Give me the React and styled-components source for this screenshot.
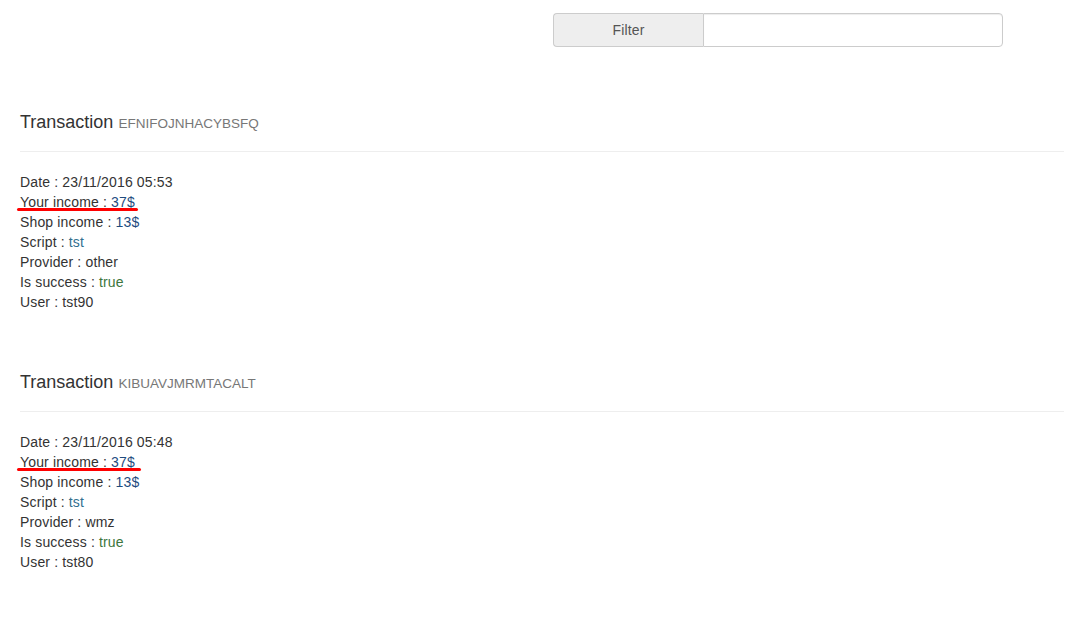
import React from 'react';
import styled, { createGlobalStyle } from "styled-components";

const GlobalStyle = createGlobalStyle`
  body {
    margin: 0;
    background: #fff;
    font-family: "Liberation Sans", Arial, sans-serif;
    font-size: 14px;
    line-height: 20px;
    color: #333;
  }
`;

const Page = styled.div`
  padding: 13px 1px 40px 20px;
`;

const FilterGroup = styled.div`
  display: flex;
  width: 450px;
  height: 34px;
  margin-left: 533px;
  box-sizing: border-box;
`;

const FilterAddon = styled.span`
  display: flex;
  align-items: center;
  justify-content: center;
  width: 150px;
  box-sizing: border-box;
  background: #eee;
  border: 1px solid #ccc;
  border-right: 0;
  border-radius: 4px 0 0 4px;
  color: #555;
  font-size: 14px;
  letter-spacing: 0.15px;
`;

const FilterInput = styled.input`
  flex: 1;
  min-width: 0;
  box-sizing: border-box;
  border: 1px solid #ccc;
  border-radius: 0 4px 4px 0;
  padding: 6px 12px;
  font: inherit;
  box-shadow: inset 0 1px 1px rgba(0, 0, 0, 0.075);
  outline: none;
`;

const List = styled.div`
  display: flex;
  flex-direction: column;
  gap: 60px;
  margin-top: 65px;
`;

const Header = styled.div`
  padding-top: 1px;
  padding-bottom: 18px;
  border-bottom: 1px solid #eee;
  margin-bottom: 20px;
`;

const Title = styled.h4`
  margin: 0;
  font-size: 18px;
  font-weight: 500;
  line-height: 1.1;
  color: #333;
`;

const Code = styled.small`
  font-size: 13.5px;
  font-weight: normal;
  color: #777;
`;

const Details = styled.div`
  display: flex;
  flex-direction: column;
  align-items: flex-start;
  letter-spacing: 0.15px;
`;

const Row = styled.div`
  position: relative;
  ${p => p.$marked && `
    &::after {
      content: "";
      position: absolute;
      left: -3px;
      right: ${p.$markRight}px;
      bottom: 1px;
      height: 3px;
      border-radius: 2px;
      background: #f00;
    }
  `}
`;

const Value = styled.span`
  color: ${p => p.$tone || 'inherit'};
`;

const TONES = {
  money: '#1f4c7f',
  info: '#31708f',
  success: '#3c763d',
};

const transactions = [
  { id: 'EFNIFOJNHACYBSFQ', date: '23/11/2016 05:53', yours: 37, shop: 13, script: 'tst', provider: 'other', success: 'true', user: 'tst90', mark: -3 },
  { id: 'KIBUAVJMRMTACALT', date: '23/11/2016 05:48', yours: 37, shop: 13, script: 'tst', provider: 'wmz', success: 'true', user: 'tst80', mark: -6 },
];

const Transaction = ({ t }) => (
  <div>
    <Header>
      <Title>Transaction <Code>{t.id}</Code></Title>
    </Header>
    <Details>
      <Row>Date : {t.date}</Row>
      <Row $marked $markRight={t.mark}>Your income : <Value $tone={TONES.money}>{t.yours}$</Value></Row>
      <Row>Shop income : <Value $tone={TONES.money}>{t.shop}$</Value></Row>
      <Row>Script : <Value $tone={TONES.info}>{t.script}</Value></Row>
      <Row>Provider : {t.provider}</Row>
      <Row>Is success : <Value $tone={TONES.success}>{t.success}</Value></Row>
      <Row>User : {t.user}</Row>
    </Details>
  </div>
);

const App = () => (
  <>
    <GlobalStyle />
    <Page>
      <FilterGroup>
        <FilterAddon>Filter</FilterAddon>
        <FilterInput type="text" />
      </FilterGroup>
      <List>
        {transactions.map(t => <Transaction key={t.id} t={t} />)}
      </List>
    </Page>
  </>
);

export default App;
